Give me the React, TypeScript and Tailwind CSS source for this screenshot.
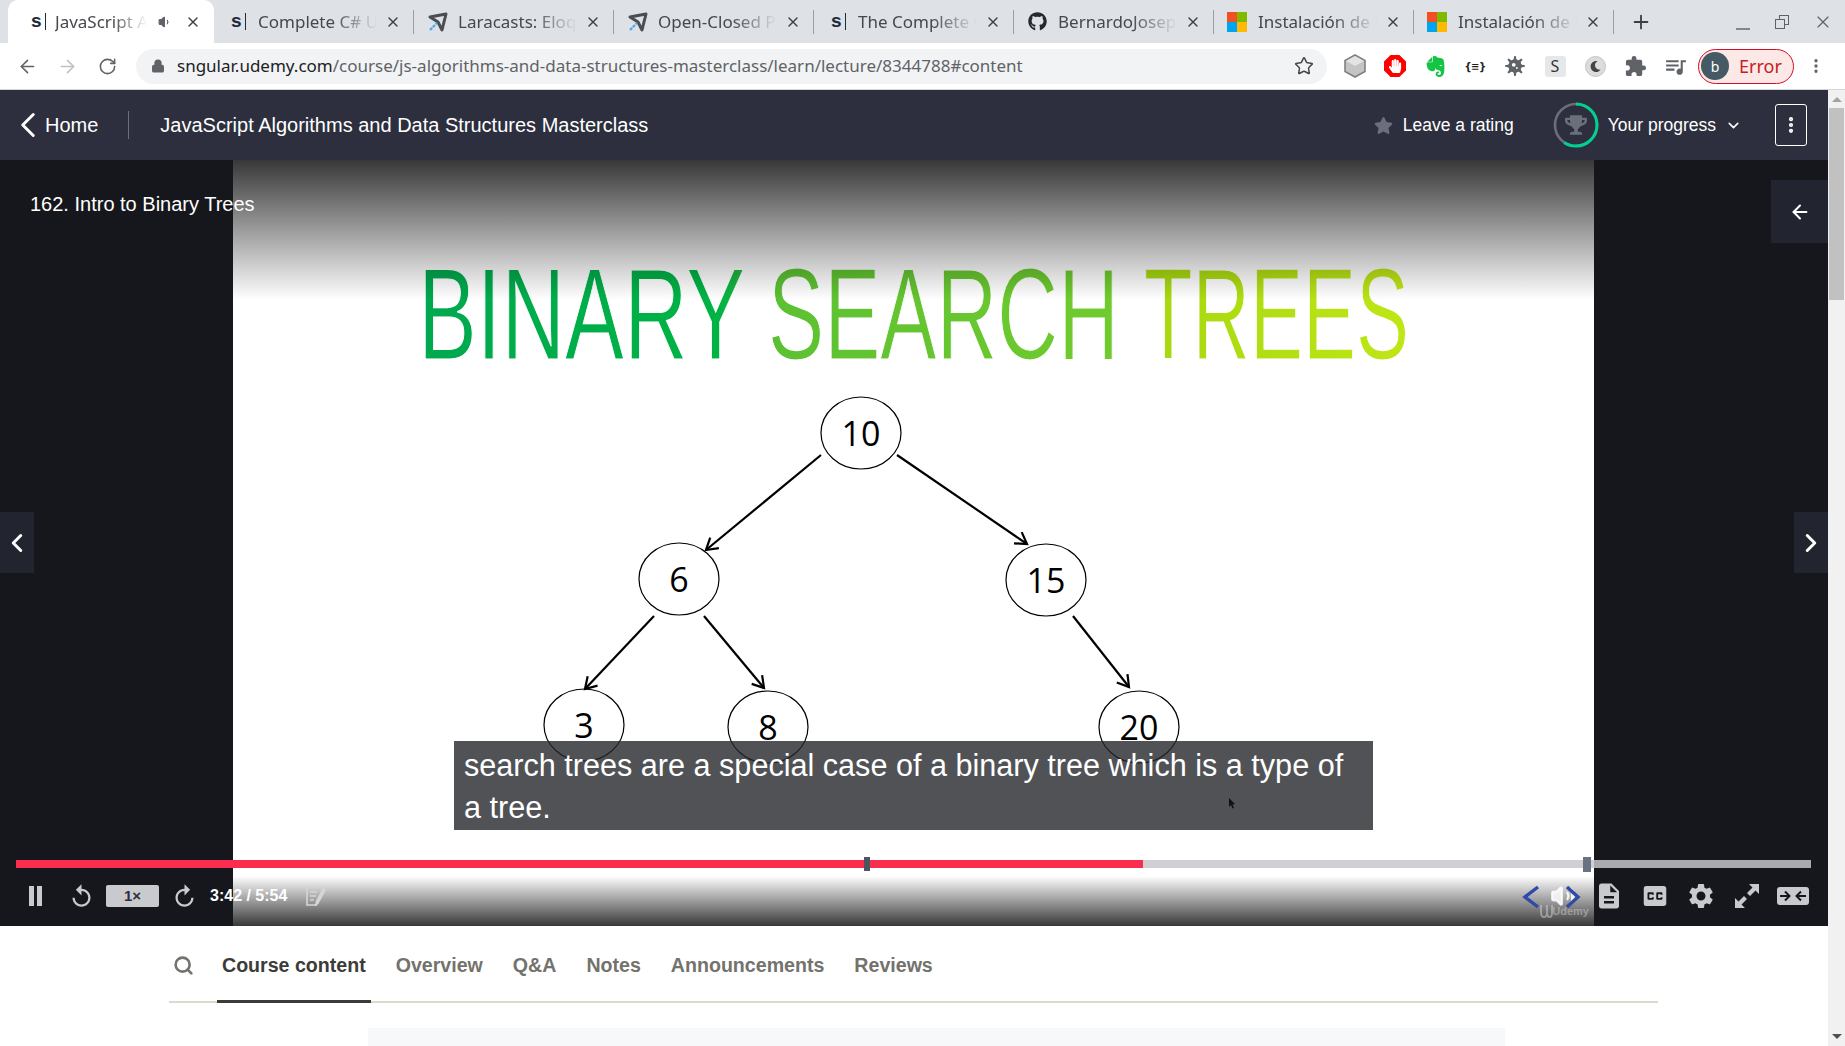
import { ArrowLeft, ArrowRight, ChevronDown, ChevronLeft, ChevronRight, Lock, MoreVertical, Plus, RotateCw, Search, Star, Volume1, Volume2, X } from "lucide-react";
import { FaGithub, FaHandPaper, FaMoon, FaStar, FaTrophy, FaVirus } from "react-icons/fa";
import { MdClosedCaption, MdDescription, MdExtension, MdQueueMusic, MdReplay, MdSettings } from "react-icons/md";
import { SiEvernote } from "react-icons/si";

const SFavicon = () => (
  <span className="flex items-center ml-[3px] h-[18px]">
    <span className="font-['Liberation_Sans',sans-serif] font-bold text-[19px] leading-none text-[#1c2b3c] mt-[-3px]">s</span>
    <span className="ml-[3px] h-[17px] w-[1px] bg-[#1c2b3c]" />
  </span>
);

const PlaneFavicon = () => (
  <svg width="20" height="20" viewBox="0 0 20 20" fill="none">
    <path d="M2 5 L18 2 L14 18 L10 10 Z" stroke="#4a4d52" strokeWidth="3" strokeLinejoin="round" />
    <path d="M2 18 L9 11" stroke="#4aa8ee" strokeWidth="2.2" strokeDasharray="3 1" />
  </svg>
);

const MsFavicon = () => (
  <span className="grid grid-cols-2 grid-rows-2 w-[20px] h-[20px] ml-[-1px]">
    <span className="bg-[#f25022]" />
    <span className="bg-[#7fba00]" />
    <span className="bg-[#00a4ef]" />
    <span className="bg-[#ffb900]" />
  </span>
);

const tabs = [
  { title: "Complete C# Unity", icon: <SFavicon /> },
  { title: "Laracasts: Eloquent", icon: <PlaneFavicon /> },
  { title: "Open-Closed Principle", icon: <PlaneFavicon /> },
  { title: "The Complete Guide", icon: <SFavicon /> },
  { title: "BernardoJoseph", icon: <FaGithub size={19} className="text-[#24292e]" /> },
  { title: "Instalación de Laravel", icon: <MsFavicon /> },
  { title: "Instalación de Laravel", icon: <MsFavicon /> },
];

function TabBar() {
  return (
    <div className="h-[43px] bg-[#dee1e6] flex pl-[8px] font-['Noto_Sans',sans-serif] text-[17px] text-[#45484c]">
      <div className="w-[206px] bg-white rounded-t-[10px] flex items-center pl-[20px] pr-[13px]">
        <span className="w-[27px] shrink-0"><SFavicon /></span>
        <span className="w-[92px] overflow-hidden whitespace-nowrap [mask-image:linear-gradient(to_right,black_62%,transparent)]">JavaScript Algorithms</span>
        <Volume1 size={14} className="ml-[11px] text-[#5f6368] fill-[#5f6368]" />
        <X size={16} strokeWidth={2} className="ml-auto text-[#3c4043]" />
      </div>
      {tabs.map((t, i) => (
        <div key={i} className="w-[200px] flex items-center pl-[14px] pr-[13px] relative">
          <span className="w-[30px] shrink-0">{t.icon}</span>
          <span className="flex-1 overflow-hidden whitespace-nowrap [mask-image:linear-gradient(to_right,black_62%,transparent)]">{t.title}</span>
          <X size={16} strokeWidth={2} className="ml-[8px] text-[#3c4043]" />
          <span className="absolute right-0 top-[10px] h-[24px] w-[1px] bg-[#9aa0a6]" />
        </div>
      ))}
      <div className="ml-[16px] flex items-center">
        <Plus size={22} strokeWidth={2} className="text-[#3c4043]" />
      </div>
      <div className="ml-auto flex items-center text-[#5f6368]">
        <span className="w-[14px] h-[2px] bg-[#80868b] mt-[14px] mr-[25px]" />
        <span className="relative w-[14px] h-[14px] mr-[24px]">
          <span className="absolute right-0 top-0 w-[10px] h-[10px] border-[1.5px] border-[#5f6368]" />
          <span className="absolute left-0 bottom-0 w-[10px] h-[10px] border-[1.5px] border-[#5f6368] bg-[#dee1e6]" />
        </span>
        <X size={20} strokeWidth={1.4} className="mr-[12px] text-[#5f6368]" />
      </div>
    </div>
  );
}

function ToolButton({ children }: { children: React.ReactNode }) {
  return <span className="w-[40px] h-[24px] flex items-center justify-center shrink-0">{children}</span>;
}

function Toolbar() {
  return (
    <div className="h-[47px] bg-white border-b border-[#d3d5d8] flex items-center font-['Noto_Sans',sans-serif]">
      <div className="w-[136px] flex items-center shrink-0 pl-[7px]">
        <span className="w-[40px] flex justify-center"><ArrowLeft size={21} strokeWidth={1.8} className="text-[#5f6368]" /></span>
        <span className="w-[40px] flex justify-center"><ArrowRight size={21} strokeWidth={1.8} className="text-[#bdc1c6]" /></span>
        <span className="w-[40px] flex justify-center"><RotateCw size={19} strokeWidth={2} className="text-[#5f6368]" /></span>
      </div>
      <div className="w-[1191px] h-[35px] rounded-full bg-[#f1f3f4] flex items-center pl-[15px] pr-[13px] shrink-0">
        <Lock size={14} strokeWidth={2.5} className="text-[#5f6368] fill-[#5f6368]" />
        <span className="ml-[12px] text-[17px] whitespace-nowrap text-[#5f6368]">
          <span className="text-[#202124]">sngular.udemy.com</span>/course/js-algorithms-and-data-structures-masterclass/learn/lecture/8344788#content
        </span>
        <Star size={20} strokeWidth={1.8} className="ml-auto text-[#45484c]" />
      </div>
      <div className="pl-[8px] flex items-center shrink-0">
        <ToolButton>
          <svg width="22" height="24" viewBox="0 0 22 24">
            <path d="M11 1 L21 6.5 V17.5 L11 23 L1 17.5 V6.5 Z" fill="#c4c4c4" stroke="#808080" strokeWidth="1.6" />
            <path d="M11 12 L2 7 L11 2 L20 7 Z" fill="#e3e3e3" />
          </svg>
        </ToolButton>
        <ToolButton>
          <span className="relative w-[22px] h-[22px] flex items-center justify-center bg-[#f00] [clip-path:polygon(30%_0,70%_0,100%_30%,100%_70%,70%_100%,30%_100%,0_70%,0_30%)]">
            <FaHandPaper size={14} className="text-white" />
          </span>
        </ToolButton>
        <ToolButton><SiEvernote size={21} className="text-[#14c445]" /></ToolButton>
        <ToolButton><span className="text-[10px] font-bold text-[#222] font-['DejaVu_Sans',sans-serif] tracking-tighter">{"{≡}"}</span></ToolButton>
        <ToolButton><FaVirus size={20} className="text-[#5f6368]" /></ToolButton>
        <ToolButton>
          <span className="w-[21px] h-[21px] rounded-[3px] bg-[#e6e7e8] flex items-center justify-center text-[16px] text-[#333] leading-none">S</span>
        </ToolButton>
        <ToolButton>
          <span className="w-[21px] h-[21px] rounded-full bg-[#dcdcdc] border border-[#c4c4c4] flex items-center justify-center">
            <FaMoon size={11} className="text-[#444]" />
          </span>
        </ToolButton>
        <ToolButton><MdExtension size={23} className="text-[#5f6368]" /></ToolButton>
        <ToolButton><MdQueueMusic size={25} className="text-[#5f6368]" /></ToolButton>
      </div>
      <div className="ml-[3px] w-[96px] h-[35px] rounded-full border-[1.5px] border-[#d50f25] bg-[#fce8e6] flex items-center pl-[2px] shrink-0">
        <span className="w-[28px] h-[28px] rounded-full bg-[#455a64] text-white text-[14px] flex items-center justify-center">b</span>
        <span className="ml-[10px] text-[18px] text-[#c5221f]">Error</span>
      </div>
      <MoreVertical size={18} strokeWidth={2.4} className="ml-[13px] text-[#5f6368]" />
    </div>
  );
}

function CourseHeader() {
  return (
    <header className="h-[70px] bg-[#2d2f3e] flex items-center text-white font-['Liberation_Sans',sans-serif] shrink-0">
      <ChevronLeft size={42} strokeWidth={1.7} className="ml-[7px]" />
      <span className="-ml-[4px] text-[20px]">Home</span>
      <span className="ml-[30px] h-[28px] w-[1px] bg-[#6a6f7b]" />
      <span className="ml-[31px] text-[20px]">JavaScript Algorithms and Data Structures Masterclass</span>
      <div className="ml-auto flex items-center">
        <FaStar size={19} className="text-[#6a6f7b]" />
        <span className="ml-[10px] text-[17.5px]">Leave a rating</span>
        <span className="relative ml-[39px] w-[46px] h-[46px] flex items-center justify-center">
          <svg width="46" height="46" viewBox="0 0 46 46" className="absolute inset-0">
            <circle cx="23" cy="23" r="21" fill="none" stroke="#6a6f7b" strokeWidth="2.6" />
            <circle cx="23" cy="23" r="21" fill="none" stroke="#00d18f" strokeWidth="3" strokeDasharray="78 132" transform="rotate(-90 23 23)" />
          </svg>
          <FaTrophy size={22} className="text-[#6a6f7b]" />
        </span>
        <span className="ml-[9px] text-[17.5px]">Your progress</span>
        <ChevronDown size={17} strokeWidth={2.2} className="ml-[9px]" />
        <span className="ml-[33px] mr-[21px] w-[32px] h-[42px] border border-white rounded-[3px] flex items-center justify-center">
          <MoreVertical size={20} strokeWidth={3} />
        </span>
      </div>
    </header>
  );
}

const nodes = [
  { label: "10", cx: 861, cy: 433 },
  { label: "6", cx: 679, cy: 579 },
  { label: "15", cx: 1046, cy: 580 },
  { label: "3", cx: 584, cy: 725 },
  { label: "8", cx: 768, cy: 727 },
  { label: "20", cx: 1139, cy: 727 },
];

const edges = [
  [821, 455, 706, 550],
  [897, 455, 1027, 544],
  [654, 616, 585, 689],
  [704, 616, 764, 688],
  [1073, 616, 1129, 687],
];

function arrowHead([x1, y1, x2, y2]: number[]) {
  const a = Math.atan2(y2 - y1, x2 - x1);
  const p = (d: number) => `${x2 - 13 * Math.cos(a + d)},${y2 - 13 * Math.sin(a + d)}`;
  return `${p(0.55)} ${x2},${y2} ${p(-0.55)}`;
}

function Slide() {
  return (
    <div className="relative w-[1361px] h-full ml-[233px] bg-white">
      <svg width="1361" height="766" viewBox="233 160 1361 766" className="block">
        <defs>
          <linearGradient id="title" gradientUnits="userSpaceOnUse" x1="426" y1="0" x2="1405" y2="0">
            <stop offset="0" stopColor="#00a84f" />
            <stop offset="0.3" stopColor="#00b344" />
            <stop offset="0.36" stopColor="#5cc132" />
            <stop offset="0.7" stopColor="#70cb2e" />
            <stop offset="0.735" stopColor="#a5d810" />
            <stop offset="1" stopColor="#bfe615" />
          </linearGradient>
        </defs>
        <g fontFamily="'Liberation Sans', sans-serif" fontSize="130" fill="url(#title)" stroke="#fff" strokeWidth="1.2">
          <text x="418" y="359" textLength="327" lengthAdjust="spacingAndGlyphs">BINARY</text>
          <text x="768" y="359" textLength="351" lengthAdjust="spacingAndGlyphs">SEARCH</text>
          <text x="1144" y="359" textLength="265" lengthAdjust="spacingAndGlyphs">TREES</text>
        </g>
        {edges.map((e, i) => (
          <g key={i} stroke="#000" fill="none" strokeWidth="2.2">
            <line x1={e[0]} y1={e[1]} x2={e[2]} y2={e[3]} />
            <polyline points={arrowHead(e)} />
          </g>
        ))}
        {nodes.map((n) => (
          <g key={n.label}>
            <ellipse cx={n.cx} cy={n.cy} rx="40" ry="36" fill="none" stroke="#000" strokeWidth="1.2" />
            <text x={n.cx} y={n.cy + 13} textAnchor="middle" fontFamily="'Open Sans', sans-serif" fontSize="34" fill="#000">{n.label}</text>
          </g>
        ))}
      </svg>
      <div className="absolute top-0 inset-x-0 h-[140px] bg-linear-to-b from-[rgba(0,0,0,0.78)] to-transparent" />
      <div className="absolute bottom-0 inset-x-0 h-[50px] bg-linear-to-t from-[rgba(0,0,0,0.78)] to-transparent" />
      <svg width="15" height="14" viewBox="0 0 15 14" fill="none" stroke="#cfcfcf" strokeOpacity="0.5" strokeWidth="2" className="absolute bottom-[8px] right-[40px]">
        <path d="M2 1 V8 Q2 13 5 13 Q8 13 8 8 V1 M8 8 Q8 13 11 13 Q13 13 13 8 V1" />
      </svg>
      <div className="absolute bottom-[7px] right-[5px] text-[11px] font-bold text-[#cfcfcf]/50">Udemy</div>
    </div>
  );
}

function ExpandIcon() {
  return (
    <svg width="26" height="26" viewBox="0 0 26 26" fill="#c9cacd">
      <path d="M15 1 H25 V11 L21.5 7.5 L16 13 L13 10 L18.5 4.5 Z" />
      <path d="M11 25 H1 V15 L4.5 18.5 L10 13 L13 16 L7.5 21.5 Z" />
    </svg>
  );
}

function TheaterIcon() {
  return (
    <svg width="32" height="18" viewBox="0 0 32 18">
      <rect width="32" height="18" rx="3" fill="#c9cacd" />
      <path d="M3 9 H12 M8 4.5 L12.5 9 L8 13.5 M29 9 H20 M24 4.5 L19.5 9 L24 13.5" stroke="#16171c" strokeWidth="2" fill="none" />
    </svg>
  );
}

function NoteIcon() {
  return (
    <svg width="20" height="20" viewBox="0 0 20 20" fill="none" stroke="#d4d5d8" strokeWidth="1.6">
      <path d="M14 1 H1 V19 H11" />
      <path d="M4 6 H11 M4 10 H10 M4 14 H8" />
      <path d="M19 4 L12 17 L10 19 L10.5 15.5 L17 3 Z" fill="#d4d5d8" />
    </svg>
  );
}

function VideoPlayer() {
  return (
    <div className="relative h-[766px] bg-[#16171c] font-['Liberation_Sans',sans-serif] shrink-0 overflow-hidden">
      <Slide />
      <div className="absolute left-[30px] top-[29px] text-[20px] text-white">162. Intro to Binary Trees</div>

      <div className="absolute right-0 top-[20px] w-[57px] h-[63px] bg-[#22252f] flex items-center justify-center">
        <ArrowLeft size={22} strokeWidth={2.2} className="text-white" />
      </div>
      <div className="absolute left-0 top-[352px] w-[34px] h-[61px] bg-[#22252f] flex items-center justify-center">
        <ChevronLeft size={30} strokeWidth={2.4} className="text-white" />
      </div>
      <div className="absolute right-0 top-[352px] w-[34px] h-[61px] bg-[#22252f] flex items-center justify-center">
        <ChevronRight size={30} strokeWidth={2.4} className="text-white" />
      </div>

      <div className="absolute left-[454px] top-[581px] w-[919px] h-[89px] bg-[rgba(38,39,44,0.8)] px-[10px] pt-[3px] text-[30.6px] leading-[42px] text-white">
        search trees are a special case of a binary tree which is a type of a tree.
      </div>
      <svg width="7" height="11" viewBox="0 0 7 11" className="absolute left-[1229px] top-[638px]">
        <path d="M0 0 L6 6 L3.5 6.5 L5 10 L3.5 10.5 L2 7 L0 9 Z" fill="#111" />
      </svg>

      <div className="absolute left-[16px] right-[17px] top-[700px] h-[8px] bg-[rgba(198,199,203,0.84)]">
        <div className="h-full w-[62.8%] bg-[#fb2d4f]" />
        <span className="absolute left-[848px] top-[-3px] w-[6px] h-[14px] bg-[#4d5560]" />
        <span className="absolute left-[1567px] top-[-3px] w-[8px] h-[15px] bg-[#6a7180]" />
      </div>

      <div className="absolute inset-x-0 top-[716px] h-[40px] flex items-center pl-[12px] pr-[12px]">
        <span className="w-[46px] flex justify-center gap-[3px]">
          <span className="w-[5px] h-[20px] bg-[#c9cacd]" />
          <span className="w-[5px] h-[20px] bg-[#c9cacd]" />
        </span>
        <span className="w-[46px] flex justify-center"><MdReplay size={27} className="text-[#c9cacd]" /></span>
        <span className="ml-[2px] w-[53px] h-[22px] rounded-[2px] bg-[#c9cacd] text-[#2d2f3e] text-[15px] font-bold flex items-center justify-center">1×</span>
        <span className="w-[51px] flex justify-center"><MdReplay size={27} className="text-[#c9cacd] -scale-x-100" /></span>
        <span className="text-[16px] font-bold text-white whitespace-nowrap">3:42 / 5:54</span>
        <span className="ml-[19px]"><NoteIcon /></span>
        <div className="ml-auto flex items-center">
          <span className="w-[46px] flex justify-center"><Volume2 size={26} className="text-white/80 fill-white/80" /></span>
          <span className="w-[46px] flex justify-center"><MdDescription size={30} className="text-[#c9cacd]" /></span>
          <span className="w-[46px] flex justify-center"><MdClosedCaption size={30} className="text-[#c9cacd]" /></span>
          <span className="w-[46px] flex justify-center"><MdSettings size={30} className="text-[#c9cacd]" /></span>
          <span className="w-[46px] flex justify-center"><ExpandIcon /></span>
          <span className="w-[46px] flex justify-center"><TheaterIcon /></span>
        </div>
      </div>

      <svg width="60" height="24" viewBox="0 0 60 24" fill="none" stroke="#2f4aa8" strokeWidth="3.4" className="absolute left-[1522px] top-[725px]">
        <path d="M16 2 L3 12 L16 22 M45 2 L56 12 L45 22" />
      </svg>
    </div>
  );
}

const navItems = ["Overview", "Q&A", "Notes", "Announcements", "Reviews"];

function CourseTabs() {
  return (
    <div className="font-['Liberation_Sans',sans-serif]">
      <nav className="ml-[169px] w-[1489px] h-[77px] border-b-2 border-[#dcdacb] flex items-stretch gap-[20px] text-[19.6px] font-bold text-[#73726c]">
        <span className="w-[48px] -mr-[20px] flex items-center pl-[4px] pt-[3px]">
          <Search size={21} strokeWidth={3} className="text-[#73726c]" />
        </span>
        <span className="px-[5px] pt-[5px] flex items-center text-[#3c3b37] border-b-[3px] border-[#3c3b37] -mb-[2px]">Course content</span>
        {navItems.map((n) => (
          <span key={n} className="px-[5px] pt-[5px] flex items-center">{n}</span>
        ))}
      </nav>
      <div className="mt-[25px] ml-[368px] w-[1137px] h-[40px] bg-[#f7f8fa]" />
    </div>
  );
}

function Scrollbar() {
  return (
    <div className="w-[17px] bg-[#f1f1f1] flex flex-col items-center shrink-0">
      <span className="mt-[7px] w-0 h-0 border-x-[5px] border-x-transparent border-b-[5px] border-b-[#a3a3a3]" />
      <span className="mt-[6px] w-[15px] h-[192px] bg-[#c1c1c1]" />
      <span className="mt-auto mb-[7px] w-0 h-0 border-x-[5px] border-x-transparent border-t-[5px] border-t-[#505050]" />
    </div>
  );
}

export default function App() {
  return (
    <div className="w-[1845px] h-[1046px] overflow-hidden flex flex-col bg-white">
      <TabBar />
      <Toolbar />
      <div className="flex-1 flex min-h-0">
        <main className="flex-1 min-w-0 flex flex-col overflow-hidden">
          <CourseHeader />
          <VideoPlayer />
          <CourseTabs />
        </main>
        <Scrollbar />
      </div>
    </div>
  );
}
